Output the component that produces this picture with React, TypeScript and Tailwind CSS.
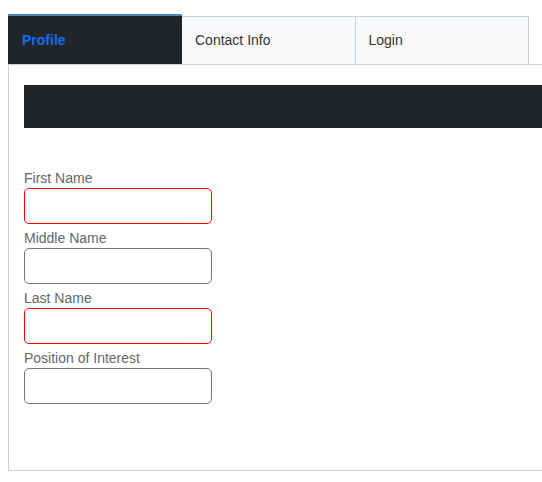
import React from 'react';

const tabs = ['Profile', 'Contact Info', 'Login'];

const fields = [
  { label: 'First Name', invalid: true },
  { label: 'Middle Name', invalid: false },
  { label: 'Last Name', invalid: true },
  { label: 'Position of Interest', invalid: false },
];

export default function App() {
  return (
    <div className="h-[482px] w-[542px] overflow-hidden bg-white pl-2 pt-[14px] font-['Liberation_Sans',Arial,sans-serif] text-sm">
      {/* Tab strip */}
      <div className="flex h-[50px] w-[521px]">
        {tabs.map((tab, i) =>
          i === 0 ? (
            <div
              key={tab}
              className="flex w-[174px] items-center border-t-2 border-[#4f86b8] bg-[#212529] pb-px pl-[14px] font-bold text-[#0d6efd]"
            >
              {tab}
            </div>
          ) : (
            <div
              key={tab}
              className="mt-[2px] flex w-[173.5px] items-center border-r border-t border-[#c6d1df] bg-[#f8f9fa] pb-px pl-[13px] text-[#333]"
            >
              {tab}
            </div>
          )
        )}
      </div>

      {/* Panel */}
      <div className="h-[407px] w-[600px] border-b border-l border-t border-[#c6d1df] pl-[15px] pt-5">
        <div className="h-[43px] bg-[#212529]" />

        <form className="mt-[40px] flex flex-col gap-1">
          {fields.map((f) => (
            <label key={f.label} className="flex flex-col">
              <span className="leading-5 text-[#666]">{f.label}</span>
              <input
                type="text"
                className={`h-[36px] w-[188px] rounded-[5px] border bg-white px-2 outline-none ${
                  f.invalid ? 'border-[#ff0000]' : 'border-[#767676]'
                }`}
              />
            </label>
          ))}
        </form>
      </div>
    </div>
  );
}
